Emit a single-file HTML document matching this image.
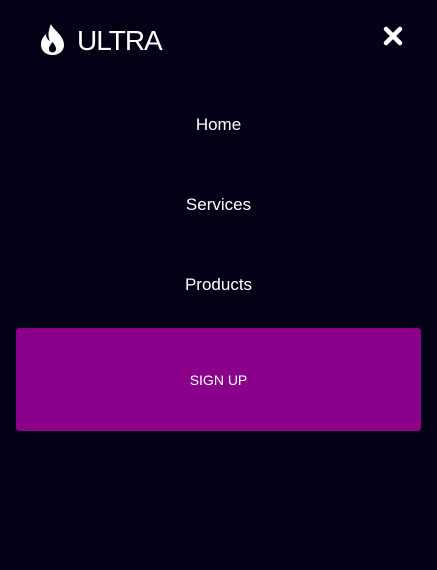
<!DOCTYPE html>
<html><head><style>
html,body{margin:0;padding:0;width:437px;height:570px;background:#040117;overflow:hidden;font-family:"Liberation Sans",sans-serif;color:#fff}
.logo{position:absolute;left:40px;top:24px}
.brand{position:absolute;left:77px;top:23px;font-size:28px;letter-spacing:-1px;line-height:36px}
.x{position:absolute;left:383px;top:26px}
.nav{position:absolute;left:0;width:437px;text-align:center;font-size:17px}
.btn{position:absolute;left:16px;top:328px;width:405px;height:103px;background:#8b008b;border-radius:3px;text-align:center;line-height:104px;font-size:14px}
</style></head><body>
<svg class="logo" width="25" height="32" viewBox="0 0 25 32"><path d="M11 0C13 6 24 11 24 21C24 27 19 31 12.5 31C6 31 1 27 1 20.5C1 16 3 13 6 10C6 14 8 16 10 17C7 11 9 5 11 0ZM12.5 18C10 21 9 23 9 25C9 27 10.5 28.5 12.5 28.5C14.5 28.5 16 27 16 25C16 23 15 21 12.5 18Z" fill="#fff" fill-rule="evenodd"/></svg>
<div class="brand">ULTRA</div>
<svg class="x" width="20" height="20" viewBox="0 0 20 20"><path d="M3 3L17 17M17 3L3 17" stroke="#fff" stroke-width="4.5" stroke-linecap="round"/></svg>
<div class="nav" style="top:115px">Home</div>
<div class="nav" style="top:195px">Services</div>
<div class="nav" style="top:275px">Products</div>
<div class="btn">SIGN UP</div>
</body></html>
